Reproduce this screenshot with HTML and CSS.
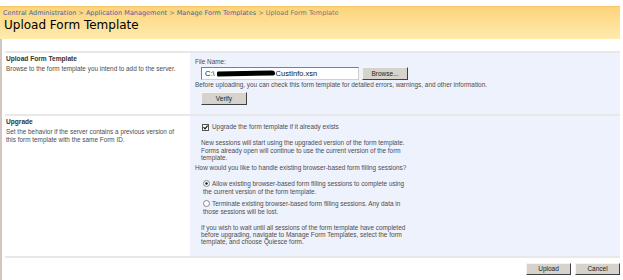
FILE: index.html
```html
<!DOCTYPE html>
<html lang="en">
<head>
    <meta charset="UTF-8">
    <title>Upload Form Template</title>
    <link rel="stylesheet" href="styles.css">
</head>
<body>
    <div class="page">
        <div class="header">
            <div class="crumbs">
                <a href="#">Central Administration</a> &gt;
                <a href="#">Application Management</a> &gt;
                <a href="#">Manage Form Templates</a> &gt;
                <span>Upload Form Template</span>
            </div>
            <h1>Upload Form Template</h1>
        </div>

        <div class="main">
            <div class="section">
                <div class="info">
                    <h3>Upload Form Template</h3>
                    <p>Browse to the form template you intend to add to the server.</p>
                </div>
                <div class="field first">
                    <div class="label">File Name:</div>
                    <div class="file-row">
                        <div class="input">C:\<span class="scribble"></span>CustInfo.xsn</div>
                        <button class="btn browse">Browse...</button>
                    </div>
                    <div class="label">Before uploading, you can check this form template for detailed errors, warnings, and other information.</div>
                    <button class="btn verify">Verify</button>
                </div>
            </div>

            <div class="section">
                <div class="info">
                    <h3>Upgrade</h3>
                    <p>Set the behavior if the server contains a previous version of<br>this form template with the same Form ID.</p>
                </div>
                <div class="field second">
                    <div class="check-row">
                        <svg class="box" width="7" height="7" viewBox="0 0 7 7">
                            <rect x="0.5" y="0.5" width="6" height="6" fill="#fff" stroke="#555"/>
                            <path d="M1.5 3.2 L3 4.8 L5.6 1.6" fill="none" stroke="#111" stroke-width="1.2"/>
                        </svg>
                        <span>Upgrade the form template if it already exists</span>
                    </div>
                    <p class="note">New sessions will start using the upgraded version of the form template.<br>Forms already open will continue to use the current version of the form<br>template.</p>
                    <div class="label">How would you like to handle existing browser-based form filling sessions?</div>
                    <div class="radio">
                        <svg class="dot" width="7" height="7" viewBox="0 0 7 7">
                            <circle cx="3.5" cy="3.5" r="3" fill="#fff" stroke="#888"/>
                            <circle cx="3.5" cy="3.5" r="1.2" fill="#111"/>
                        </svg>Allow existing browser-based form filling sessions to complete using<br>the current version of the form template.
                    </div>
                    <div class="radio">
                        <svg class="dot" width="7" height="7" viewBox="0 0 7 7">
                            <circle cx="3.5" cy="3.5" r="3" fill="#fff" stroke="#888"/>
                        </svg>Terminate existing browser-based form filling sessions. Any data in<br>those sessions will be lost.
                    </div>
                    <p class="note last">If you wish to wait until all sessions of the form template have completed<br>before upgrading, navigate to Manage Form Templates, select the form<br>template, and choose Quiesce form.</p>
                </div>
            </div>

            <div class="actions">
                <button class="btn">Upload</button>
                <button class="btn">Cancel</button>
            </div>
        </div>
    </div>
</body>
</html>
```

FILE: styles.css
```css
body {
    margin: 0;
    background-color: white;
    font-family: "Liberation Sans", Arial, sans-serif;
    color: #4d4d4d;
}
.page {
    width: 620px;
    padding-top: 6px;
}
.header {
    height: 32px;
    border-top: 1px solid #f6c766;
    background: linear-gradient(#fdd47c, #feebae);
    padding-left: 3px;
}
.crumbs {
    font-family: "DejaVu Sans", Verdana, sans-serif;
    font-size: 6.5px;
    line-height: 8px;
    padding-top: 2px;
    color: #777;
}
.crumbs a {
    color: #4563a3;
    text-decoration: none;
}
h1 {
    font-family: "DejaVu Sans", Verdana, sans-serif;
    font-size: 12px;
    font-weight: normal;
    color: #000;
    margin: 1px 0 0 1px;
    line-height: 14px;
}
.main {
    border-left: 2px solid #cfc7c0;
    padding: 12px 0 0 3px;
    height: 229px;
}
.section {
    display: grid;
    grid-template-columns: 185px 1fr;
    border-top: 2px solid #e8e8e8;
    font-size: 6.4px;
    line-height: 8px;
}
.info {
    padding: 2px 0 0 1px;
}
h3 {
    margin: 0;
    font-size: 6.6px;
    color: #333;
}
.info p {
    margin: 2px 0 0;
    line-height: 7.5px;
}
.field {
    background-color: #eef2fd;
    padding-left: 5px;
}
.field.first {
    padding-top: 5px;
    padding-bottom: 9px;
}
.file-row {
    display: flex;
    gap: 3px;
    margin: 1px 0 1px 6px;
}
.input {
    width: 153px;
    height: 11px;
    border: 1px solid #7f7f7f;
    border-right-color: #d0d0d0;
    border-bottom-color: #d0d0d0;
    background-color: white;
    font-size: 7.5px;
    line-height: 11px;
    padding-left: 3px;
    color: #111;
    display: flex;
    align-items: center;
}
.scribble {
    display: inline-block;
    width: 58px;
    height: 5px;
    margin: 0 1px 0 2px;
    background-color: #000;
    border-radius: 2px 5px 3px 2px;
    transform: rotate(-1deg);
}
.btn {
    font-family: "Liberation Sans", Arial, sans-serif;
    font-size: 6.5px;
    height: 13px;
    width: 46px;
    padding: 0;
    background-color: #d6d3cd;
    border: 1px solid;
    border-color: #f4f4f4 #404040 #404040 #f4f4f4;
    color: #222;
}
.verify {
    margin: 3px 0 0 6px;
    display: block;
}
.field.second {
    padding-top: 7px;
    padding-bottom: 11px;
}
.check-row {
    display: flex;
    align-items: center;
    gap: 3px;
    margin-left: 7px;
}
.note {
    margin: 8px 0 0 6px;
    line-height: 7.5px;
}
.note.last {
    margin-top: 7px;
    line-height: 7px;
}
.second .label {
    margin-top: 2px;
}
.radio {
    margin: 8px 0 0 8px;
    line-height: 8.5px;
}
.radio + .radio {
    margin-top: 3px;
}
.dot {
    margin-right: 2px;
    vertical-align: -1px;
}
.actions {
    display: flex;
    justify-content: flex-end;
    gap: 4px;
    border-top: 2px solid #e8e8e8;
    padding-top: 5px;
}
.actions .btn {
    height: 12px;
    width: 45px;
}
```
